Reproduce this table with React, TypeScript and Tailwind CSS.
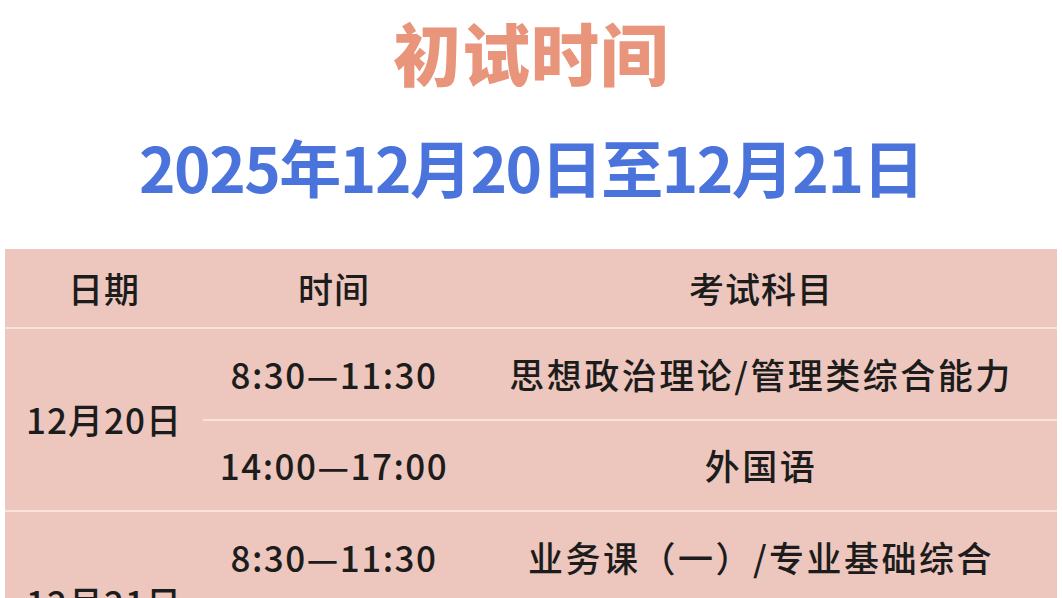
import React from 'react';

const font = { fontFamily: '"Noto Sans CJK SC", "Noto Sans", sans-serif' };

interface Slot {
  time: string;
  subject: string;
}

interface Day {
  date: string;
  slots: Slot[];
}

const days: Day[] = [
  {
    date: '12月20日',
    slots: [
      { time: '8:30—11:30', subject: '思想政治理论/管理类综合能力' },
      { time: '14:00—17:00', subject: '外国语' },
    ],
  },
  {
    date: '12月21日',
    slots: [
      { time: '8:30—11:30', subject: '业务课（一）/专业基础综合' },
      { time: '14:00—17:00', subject: '业务课（二）' },
    ],
  },
];

export default function App() {
  return (
    <div className="w-[1062px] h-[598px] overflow-hidden bg-white" style={font}>
      <div className="h-[110px] flex items-center justify-center">
        <h1 className="text-[68px] font-black leading-none text-[#e8957c] tracking-[1px] mt-[-6px]">
          初试时间
        </h1>
      </div>
      <div className="h-[120px] flex items-center justify-center">
        <h2 className="text-[62px] font-bold leading-none text-[#4b73dc] tracking-[-1.5px] mt-[-8px]">
          2025年12月20日至12月21日
        </h2>
      </div>

      <div className="mt-[19px] mx-[5px] bg-[#edc7be] text-[#1c1c1c] text-[35px] font-medium">
        <div className="grid grid-cols-[198px_262px_1fr] h-[80px] items-center border-b-2 border-[#f8e2dc] tracking-[1px]">
          <div className="text-center">日期</div>
          <div className="text-center">时间</div>
          <div className="text-center">考试科目</div>
        </div>
        {days.map((day) => (
          <div key={day.date} className="grid grid-cols-[198px_1fr] border-b-2 border-[#f8e2dc]">
            <div className="flex items-center justify-center tracking-[1px]">{day.date}</div>
            <div className="flex flex-col">
              {day.slots.map((slot, i) => (
                <div
                  key={slot.time}
                  className={
                    'grid grid-cols-[262px_1fr] items-center' +
                    (i === 0 ? ' h-[92px] border-b-2 border-[#f8e2dc]' : ' h-[89px]')
                  }
                >
                  <div className="text-center tracking-[1.5px]">{slot.time}</div>
                  <div className="text-center tracking-[2.5px]">{slot.subject}</div>
                </div>
              ))}
            </div>
          </div>
        ))}
      </div>
    </div>
  );
}
